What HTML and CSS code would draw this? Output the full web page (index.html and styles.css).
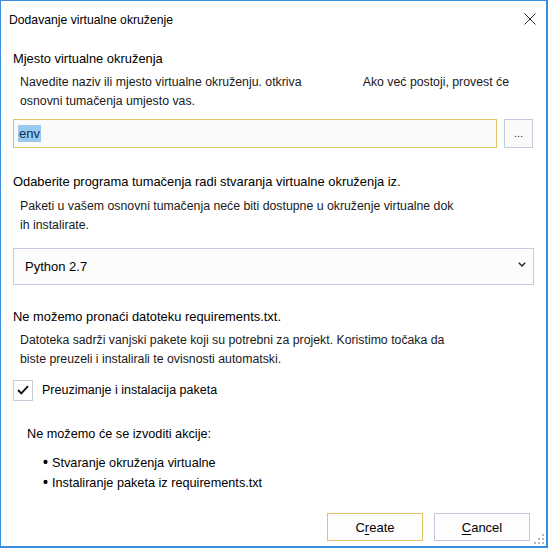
FILE: index.html
```html
<!DOCTYPE html>
<html>
<head>
<meta charset="utf-8">
<link rel="stylesheet" href="styles.css">
</head>
<body>
<div class="window">
  <div class="titlebar">
    <span class="title">Dodavanje virtualne okruženje</span>
    <svg class="close" width="12" height="12" viewBox="0 0 12 12"><path d="M0.5 0.5 L11.5 11.5 M11.5 0.5 L0.5 11.5" stroke="#333" stroke-width="1" fill="none"/></svg>
  </div>
  <div class="content">
    <div class="label l1">Mjesto virtualne okruženja</div>
    <div class="desc d1">
      <div class="line-split"><span>Navedite naziv ili mjesto virtualne okruženju. otkriva</span><span class="right">Ako već postoji, provest će</span></div>
      <div>osnovni tumačenja umjesto vas.</div>
    </div>
    <div class="path-row">
      <div class="input"><span class="sel">env</span></div>
      <div class="browse">...</div>
    </div>
    <div class="label l2">Odaberite programa tumačenja radi stvaranja virtualne okruženja iz.</div>
    <div class="desc d2">
      <div>Paketi u vašem osnovni tumačenja neće biti dostupne u okruženje virtualne dok</div>
      <div>ih instalirate.</div>
    </div>
    <div class="select">
      <span>Python 2.7</span>
      <svg class="chev" width="8" height="5" viewBox="0 0 8 5"><path d="M0.8 0.8 L4 4 L7.2 0.8" stroke="#222" stroke-width="1.4" fill="none"/></svg>
    </div>
    <div class="label l3">Ne možemo pronaći datoteku requirements.txt.</div>
    <div class="desc d3">
      <div>Datoteka sadrži vanjski pakete koji su potrebni za projekt. Koristimo točaka da</div>
      <div>biste preuzeli i instalirali te ovisnosti automatski.</div>
    </div>
    <div class="check-row">
      <div class="checkbox"><svg width="12" height="10" viewBox="0 0 12 10"><path d="M1 5 L4.3 8.4 L11 1.2" stroke="#111" stroke-width="1.8" fill="none"/></svg></div>
      <span>Preuzimanje i instalacija paketa</span>
    </div>
    <div class="actions">
      <div class="actions-title">Ne možemo će se izvoditi akcije:</div>
      <ul class="bullets">
        <li>Stvaranje okruženja virtualne</li>
        <li>Instaliranje paketa iz requirements.txt</li>
      </ul>
    </div>
    <div class="buttons">
      <div class="btn primary">C<u>r</u>eate</div>
      <div class="btn"><u>C</u>ancel</div>
    </div>
  </div>
  <svg class="grip" width="10" height="10" viewBox="0 0 10 10">
    <g fill="#b8b8b8">
      <rect x="8" y="0" width="2" height="2"/>
      <rect x="4" y="4" width="2" height="2"/><rect x="8" y="4" width="2" height="2"/>
      <rect x="0" y="8" width="2" height="2"/><rect x="4" y="8" width="2" height="2"/><rect x="8" y="8" width="2" height="2"/>
    </g>
  </svg>
</div>
</body>
</html>
```
FILE: styles.css
```css
* { box-sizing: border-box; }
html, body { margin: 0; padding: 0; background: #fff; }
body { font-family: "Liberation Sans", Arial, sans-serif; font-size: 12px; color: #000; }
.window {
  position: relative;
  width: 548px; height: 548px;
  border: 1px solid #3a8ee0;
  border-right-width: 2px;
  border-bottom-width: 2px;
  background: #fff;
  overflow: hidden;
}
.titlebar {
  height: 37px;
  display: flex;
  align-items: center;
  justify-content: space-between;
  padding: 0 10px 0 8px;
}
.title { font-size: 12.2px; color: #000; }
.close { margin-top: -1px; }
.content { padding: 0 12px 0 12px; }
.label { height: 19px; line-height: 19px; font-size: 12.9px; }
.desc { line-height: 19px; font-size: 12.3px; color: #1a1a1a; padding-left: 7px; }
.l1 { margin-top: 11px; }
.d1 { margin-top: 5px; }
.line-split { display: flex; }
.line-split .right { margin-left: auto; margin-right: 25px; }
.path-row { display: flex; margin-top: 8px; height: 29px; }
.input {
  width: 484px; height: 29px;
  border: 1px solid #e5c365;
  background: #fafafa;
  display: flex; align-items: center;
  padding-left: 4px;
  font-size: 13px;
}
.sel { background: #99c9ef; color: #0c2f55; padding: 0 1px; line-height: 17px; }
.browse {
  width: 29px; height: 29px; margin-left: 7px;
  border: 1px solid #c3cadb;
  background: #fafafa;
  display: flex; align-items: center; justify-content: center;
  font-size: 11px; color: #333; padding-bottom: 2px;
}
.l2 { margin-top: 24px; }
.d2 { margin-top: 6px; }
.select {
  margin-top: 13px;
  width: 521px; height: 37px;
  border: 1px solid #c5ccdd;
  background: #fcfcfc;
  display: flex; align-items: center; justify-content: space-between;
  padding: 0 7px 0 11px;
  font-size: 13px;
}
.chev { margin-top: -4px; }
.l3 { margin-top: 22px; }
.d3 { margin-top: 5px; }
.check-row { display: flex; align-items: center; margin-top: 10px; height: 22px; font-size: 12.5px; }
.checkbox {
  width: 20px; height: 21px;
  border: 1px solid #c8ccd8;
  background: #fff;
  display: flex; align-items: center; justify-content: center;
  margin-left: 0; margin-right: 9px;
}
.actions { padding-left: 14px; margin-top: 24px; }
.actions-title { line-height: 19px; font-size: 12.7px; }
.bullets { list-style: none; margin: 9px 0 0 0; padding: 0 0 0 17px; }
.bullets li { line-height: 20px; font-size: 12.7px; position: relative; padding-left: 8px; }
.bullets li::before { content: "\2022"; position: absolute; left: -1px; top: -1px; font-size: 14px; font-weight: bold; }
.buttons { display: flex; justify-content: flex-end; gap: 11px; margin-top: 20px; padding-right: 4px; }
.btn {
  width: 96px; height: 28px;
  border: 1px solid #c3c9db;
  background: #fdfdfd;
  display: flex; align-items: center; justify-content: center;
  font-size: 13px;
}
.btn.primary { border-color: #e5c365; }
.btn u { text-decoration-thickness: 1px; text-underline-offset: 2px; }
.grip { position: absolute; right: 2px; bottom: 2px; }
```
